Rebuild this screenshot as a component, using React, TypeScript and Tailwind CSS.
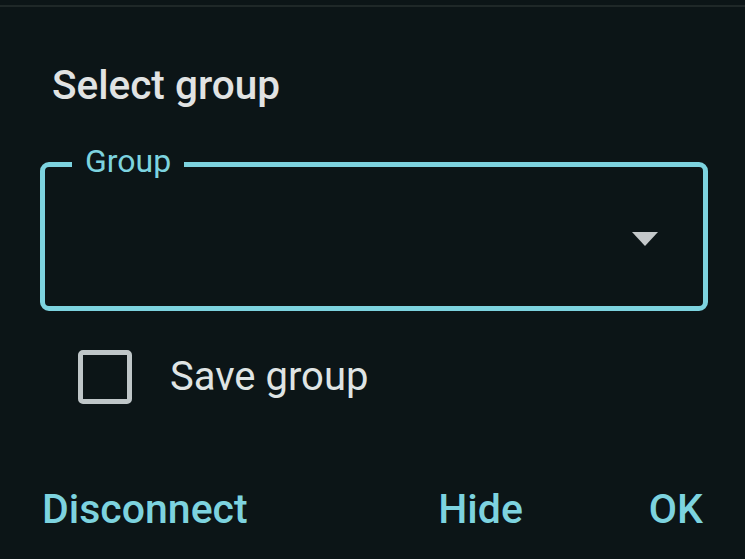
export default function App() {
  return (
    <div className="flex h-[559px] w-[745px] flex-col overflow-hidden bg-[#0c1517] font-['Roboto',sans-serif]">
      <div className="mt-[5px] h-[2px] w-full bg-[#1f2828]" />

      <h1 className="ml-[52px] mt-[54px] text-[40.5px] font-medium leading-[48px] text-[#e1e3e3]">
        Select group
      </h1>

      <div className="relative ml-[40px] mt-[53px] h-[149px] w-[668px] rounded-[9px] border-[5px] border-[#7dd3df]">
        <span className="absolute left-[27px] top-[-26px] bg-[#0c1517] px-[13px] text-[32px] leading-[40px] text-[#7dd3df]">
          Group
        </span>
        <div className="flex h-full items-center justify-end pr-[45px]">
          <svg className="mt-[5px]" width="26" height="14" viewBox="0 0 26 14">
            <path d="M0 0 L26 0 L13 14 Z" fill="#c4c8ca" />
          </svg>
        </div>
      </div>

      <label className="ml-[78px] mt-[39px] flex items-center gap-[38px]">
        <span className="h-[54px] w-[54px] rounded-[5px] border-[5px] border-[#bfc6c8]" />
        <span className="text-[40px] leading-[48px] text-[#dfe4e4]">Save group</span>
      </label>

      <div className="ml-[42px] mr-[42px] mt-[81px] flex items-center">
        <button className="text-[41px] font-medium leading-[48px] text-[#7dd3df]">Disconnect</button>
        <div className="flex-1" />
        <button className="text-[41px] font-medium leading-[48px] text-[#7dd3df]">Hide</button>
        <button className="ml-[126px] text-[41px] font-medium leading-[48px] text-[#7dd3df]">OK</button>
      </div>
    </div>
  );
}
